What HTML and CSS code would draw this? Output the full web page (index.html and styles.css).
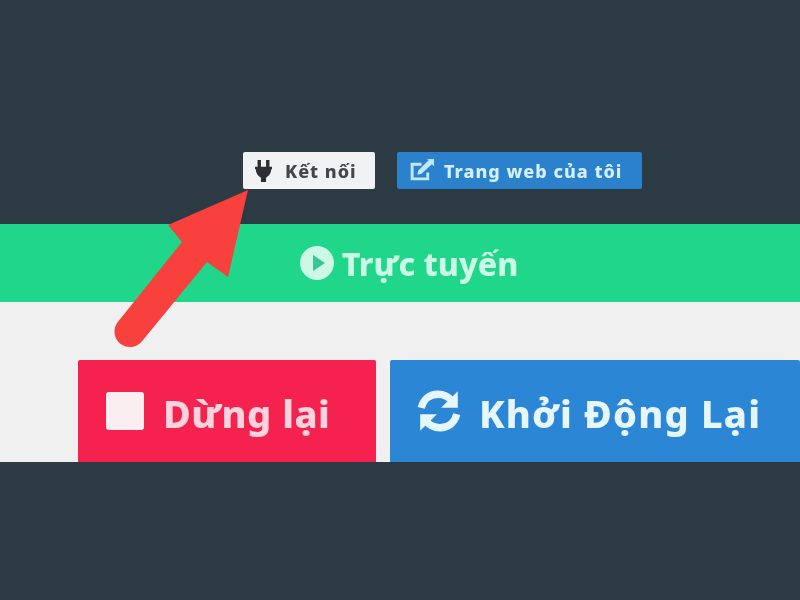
FILE: index.html
```html
<!DOCTYPE html>
<html lang="en">
<head>
  <meta charset="UTF-8">
  <meta name="viewport" content="width=device-width, initial-scale=1.0">
  <title>Trực tuyến</title>
  <link rel="stylesheet" href="styles.css">
</head>
<body>
  <div class="page">
    <div class="toolbar">
      <a class="tool-btn tool-connect">
        <svg class="tool-icon" viewBox="0 0 20 26" width="17" height="24">
          <path d="M3 0h4v8h6V0h4v8h3v3h-1c0 5-3 8-6 10v5h-6v-5C4 19 1 16 1 11H0V8h3z" fill="#2b2f33"/>
        </svg>
        Kết nối
      </a>
      <a class="tool-btn tool-site">
        <svg class="tool-icon" viewBox="0 0 24 24" width="25" height="25" fill="none" stroke="#bfe8f8" stroke-width="2.800">
          <path d="M18 14v6H3V6h9"/>
          <path d="M8 16l1-4L19 2l-2-1h7v7l-2-2-10 9z" fill="#bfe8f8" stroke="none"/>
        </svg>
        Trang web của tôi
      </a>
    </div>

    <div class="status">
      <svg class="status-icon" viewBox="0 0 34 34" width="34" height="34">
        <circle cx="17" cy="17" r="17" fill="#cdf8e6"/>
        <path d="M13 9l12 8-12 8z" fill="#35c596"/>
      </svg>
      Trực tuyến
    </div>

    <div class="actions">
      <div class="action action-stop">
        <span class="stop-icon"></span>
        <span class="action-label">Dừng lại</span>
      </div>
      <div class="action action-restart">
        <svg class="restart-icon" viewBox="0 0 44 44" width="46" height="46" fill="none" stroke="#e6f6fd" stroke-width="7">
          <path d="M5 19C7 11 13 6 21 6c6 0 10 2 14 7"/>
          <path d="M40 3v16H24z" fill="#e6f6fd" stroke="none"/>
          <path d="M39 25c-2 8-8 13-16 13-6 0-10-2-14-7"/>
          <path d="M4 41V25h16z" fill="#e6f6fd" stroke="none"/>
        </svg>
        <span class="action-label">Khởi Động Lại</span>
      </div>
    </div>

    <svg class="arrow" viewBox="0 0 800 600" width="800" height="600">
      <path d="M248 190L168 225L182 242L117 323A14 14 0 0 0 143 340L207 262L228 277z" fill="#f8403c"/>
    </svg>
  </div>
</body>
</html>
```

FILE: styles.css
```css
body {
  margin: 0;
  background: #2c3a43;
  font-family: "Noto Sans", sans-serif;
}

.page {
  position: relative;
  width: 800px;
  height: 600px;
  overflow: hidden;
  background: #2c3a43;
  filter: blur(0.7px);
}

.toolbar {
  display: flex;
  gap: 22px;
  height: 72px;
  padding: 152px 0 0 243px;
}

.tool-btn {
  display: flex;
  align-items: center;
  height: 37px;
  box-sizing: border-box;
  border-radius: 2px;
  font-size: 18px;
  font-weight: 800;
  letter-spacing: 1px;
}

.tool-connect {
  width: 132px;
  padding-left: 12px;
  gap: 13px;
  background: #f1f2f4;
  color: #44474a;
}

.tool-site {
  width: 245px;
  padding-left: 12px;
  gap: 10px;
  background: #2c81cd;
  color: #d3f0fb;
}

.status {
  display: flex;
  align-items: center;
  justify-content: center;
  gap: 8px;
  height: 78px;
  padding-left: 18px;
  box-sizing: border-box;
  background: #1fd68a;
  color: #cdf8e6;
  font-size: 32px;
  font-weight: 800;
}

.actions {
  display: flex;
  gap: 14px;
  height: 102px;
  padding: 58px 0 0 78px;
  background: #f0f0f1;
}

.action {
  display: flex;
  align-items: center;
  height: 102px;
  box-sizing: border-box;
  border-radius: 2px 2px 0 0;
  font-size: 38px;
  font-weight: 800;
}

.action-label {
  margin-top: 3px;
}

.action-stop {
  width: 298px;
  gap: 19px;
  padding-left: 28px;
  background: #f5214f;
  color: #fbd3dc;
  letter-spacing: 0.5px;
}

.action-restart {
  width: 410px;
  gap: 17px;
  padding-left: 26px;
  background: #2c86d6;
  color: #e6f6fd;
  letter-spacing: 1.2px;
}

.stop-icon {
  width: 38px;
  height: 38px;
  border-radius: 3px;
  background: #fbeef1;
}

.arrow {
  position: absolute;
  top: 0;
  left: 0;
}
```
